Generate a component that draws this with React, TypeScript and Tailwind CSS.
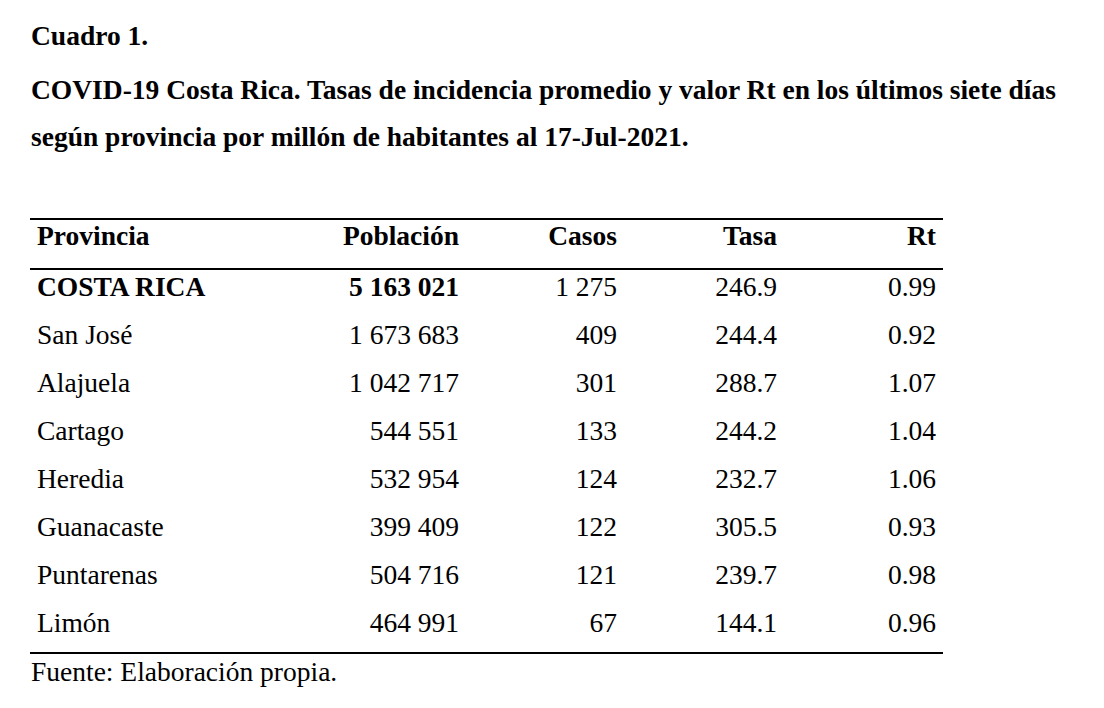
const rows = [
  { name: "COSTA RICA", pop: "5 163 021", cases: "1 275", rate: "246.9", rt: "0.99", total: true },
  { name: "San José", pop: "1 673 683", cases: "409", rate: "244.4", rt: "0.92" },
  { name: "Alajuela", pop: "1 042 717", cases: "301", rate: "288.7", rt: "1.07" },
  { name: "Cartago", pop: "544 551", cases: "133", rate: "244.2", rt: "1.04" },
  { name: "Heredia", pop: "532 954", cases: "124", rate: "232.7", rt: "1.06" },
  { name: "Guanacaste", pop: "399 409", cases: "122", rate: "305.5", rt: "0.93" },
  { name: "Puntarenas", pop: "504 716", cases: "121", rate: "239.7", rt: "0.98" },
  { name: "Limón", pop: "464 991", cases: "67", rate: "144.1", rt: "0.96" },
];

// bold: number of leading cells drawn in bold
function Row({
  cells,
  bold = 0,
  className,
}: {
  cells: string[];
  bold?: number;
  className?: string;
}) {
  const b = (i: number) => (i < bold ? "font-bold" : "");
  return (
    <div className={`flex leading-[30px] ${className ?? ""}`}>
      <div className={`w-[250px] pl-[7px] whitespace-nowrap ${b(0)}`}>{cells[0]}</div>
      <div className={`w-[186px] pr-[7px] text-right whitespace-nowrap ${b(1)}`}>{cells[1]}</div>
      <div className={`w-[158px] pr-[7px] text-right whitespace-nowrap ${b(2)}`}>{cells[2]}</div>
      <div className={`w-[160px] pr-[7px] text-right whitespace-nowrap ${b(3)}`}>{cells[3]}</div>
      <div className={`w-[159px] pr-[7px] text-right whitespace-nowrap ${b(4)}`}>{cells[4]}</div>
    </div>
  );
}

export default function App() {
  return (
    <div
      className="w-[1104px] h-[708px] bg-white text-black text-[27.5px] pl-[30px] pt-[12px] overflow-hidden"
      style={{ fontFamily: '"Liberation Serif", "Times New Roman", serif' }}
    >
      <div className="pl-[1px] font-bold leading-[47px]">Cuadro 1.</div>
      <div className="pl-[1px] font-bold leading-[47px] mt-[7px]">
        <div className="whitespace-nowrap">
          COVID-19 Costa Rica. Tasas de incidencia promedio y valor Rt en los últimos siete días
        </div>
        <div className="whitespace-nowrap">
          según provincia por millón de habitantes al 17-Jul-2021.
        </div>
      </div>

      {/* Table */}
      <div className="mt-[58px] w-[913px] border-t-2 border-b-2 border-black">
        <Row
          bold={5}
          className="pt-[1px] pb-[17px] border-b-2 border-black"
          cells={["Provincia", "Población", "Casos", "Tasa", "Rt"]}
        />
        {rows.map((r, i) => (
          <Row
            key={r.name}
            bold={r.total ? 2 : 0}
            className={i === rows.length - 1 ? "pt-[2px] pb-[14px]" : "pt-[2px] pb-[16px]"}
            cells={[r.name, r.pop, r.cases, r.rate, r.rt]}
          />
        ))}
      </div>
      <div className="pl-[1px] pt-[3px] leading-[30px]">Fuente: Elaboración propia.</div>
    </div>
  );
}
